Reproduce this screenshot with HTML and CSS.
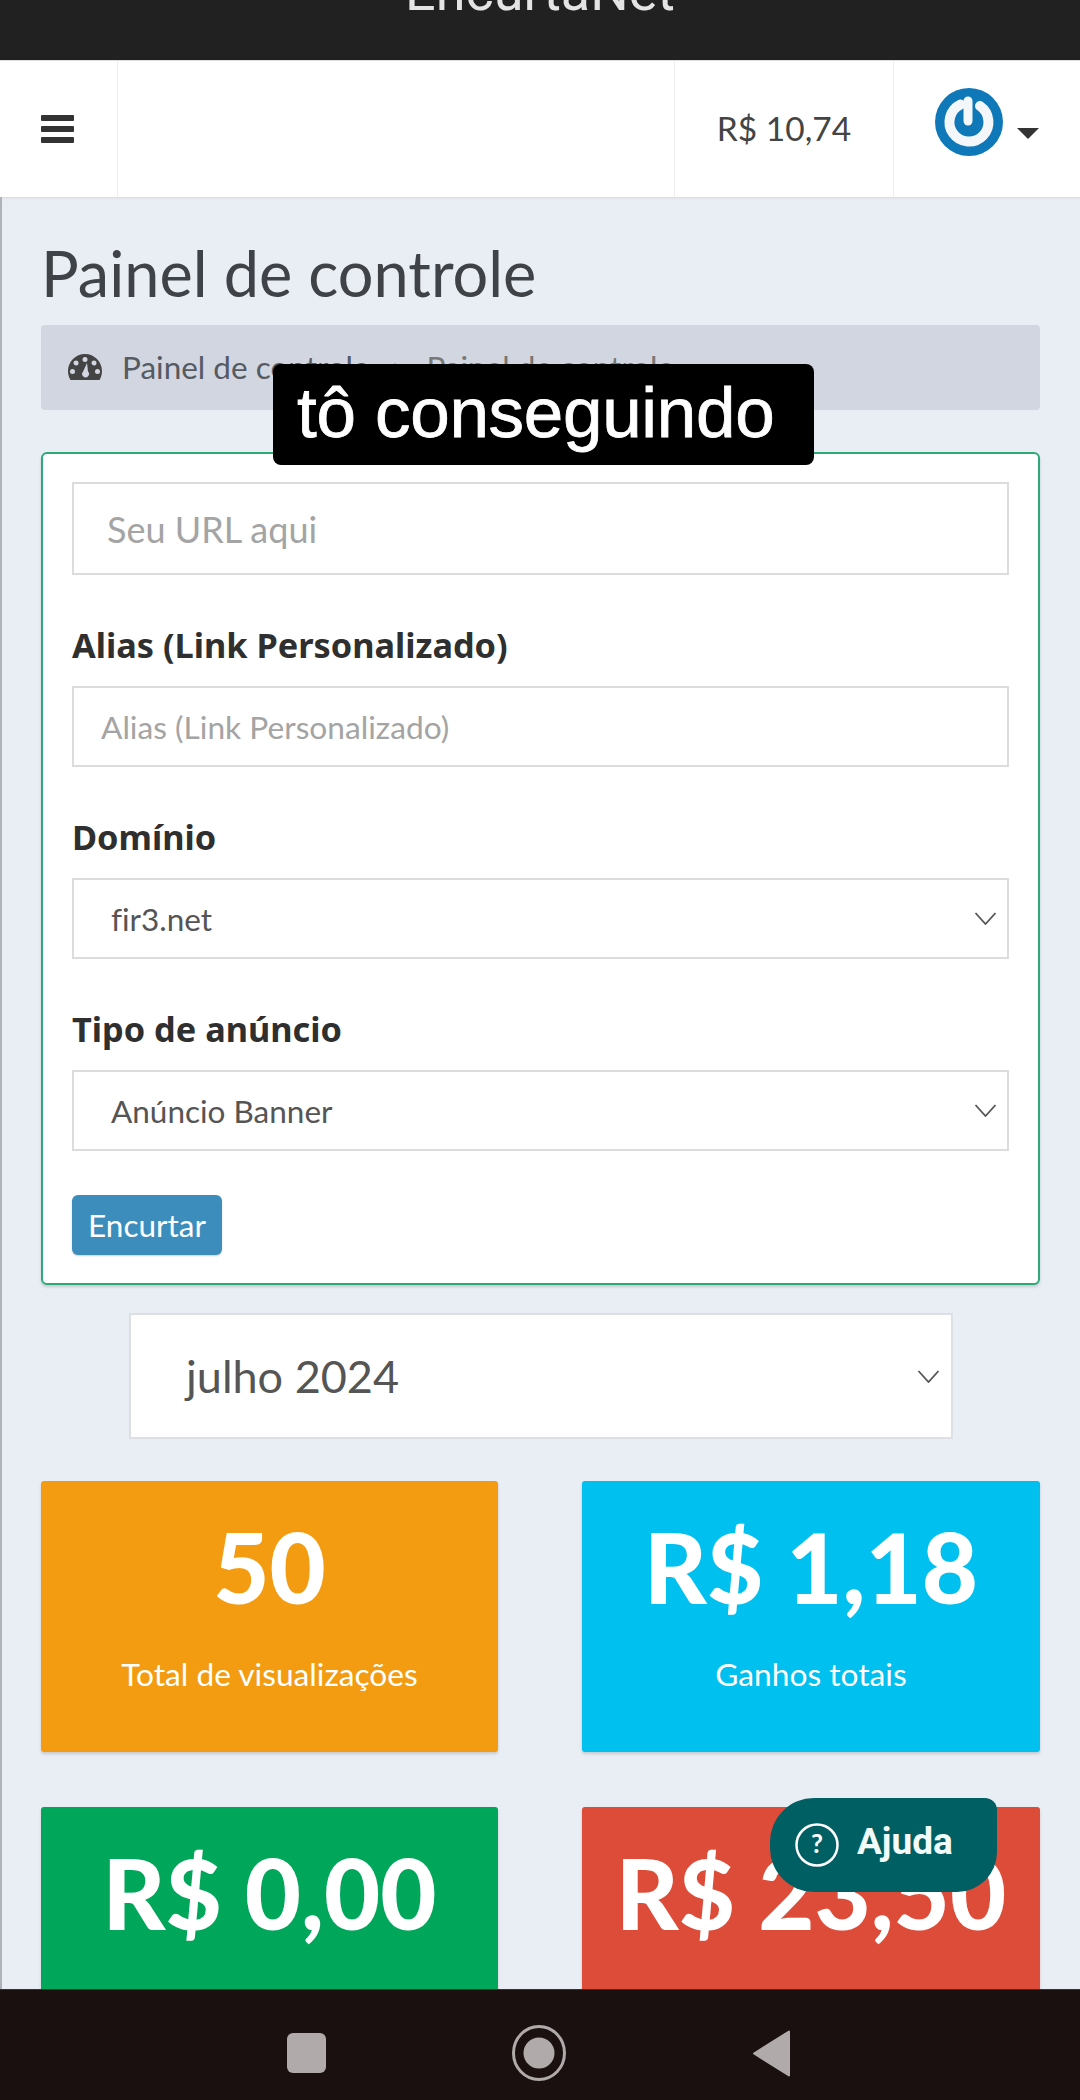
FILE: index.html

```html
<!DOCTYPE html>
<html lang="pt-BR">
<head>
  <meta charset="UTF-8" />
  <meta name="viewport" content="width=device-width, initial-scale=1.0" />
  <title>EncurtaNet - Painel de controle</title>
  <link rel="stylesheet" href="styles.css">
</head>
<body>
  <div class="topbar"><span>EncurtaNet</span></div>

  <nav class="navbar">
    <div class="nav-toggle">
      <svg class="burger" viewBox="0 0 33 28"><rect width="33" height="6" rx="1"/><rect y="11" width="33" height="6" rx="1"/><rect y="22" width="33" height="6" rx="1"/></svg>
    </div>
    <div class="nav-space"></div>
    <div class="nav-balance">R$ 10,74</div>
    <div class="nav-user">
      <svg class="avatar" viewBox="0 0 68 68">
        <circle cx="34" cy="34" r="34" fill="#0f78b8"/>
        <path d="M25.500 16.500 A19.500 19.500 0 1 0 45 18" fill="none" stroke="#f4f7fa" stroke-width="10" stroke-linecap="round"/>
        <path d="M33 13 V33" stroke="#f4f7fa" stroke-width="9" stroke-linecap="round"/>
      </svg>
      <span class="caret"></span>
    </div>
  </nav>

  <main class="content">
    <h1 class="page-title">Painel de controle</h1>

    <div class="breadcrumb">
      <svg class="gauge" viewBox="0 0 34 26">
        <path fill-rule="evenodd" d="M17 0C7.6 0 0 7.6 0 17c0 3.3 .9 6.300 2.500 9h29c1.600-2.700 2.500-5.700 2.500-9C34 7.600 26.400 0 17 0zM17 3a2.500 2.500 0 1 1 0 5 2.500 2.500 0 0 1 0-5zM8 6.500a2.500 2.500 0 1 1 0 5 2.500 2.500 0 0 1 0-5zM26 6.500a2.500 2.500 0 1 1 0 5 2.500 2.500 0 0 1 0-5zM4.500 15a2.500 2.500 0 1 1 0 5 2.500 2.500 0 0 1 0-5zM29.500 15a2.500 2.500 0 1 1 0 5 2.500 2.500 0 0 1 0-5zM19 9l1 8.500a3.400 3.400 0 1 1-5 .2z"/>
      </svg>
      <span>Painel de controle</span>
      <span class="crumb-sep">&gt;</span>
      <span class="crumb-active">Painel de controle</span>
    </div>

    <form class="box-form">
      <input class="field field-url" type="text" placeholder="Seu URL aqui" />

      <label class="form-label">Alias (Link Personalizado)</label>
      <input class="field field-alias" type="text" placeholder="Alias (Link Personalizado)" />

      <label class="form-label">Domínio</label>
      <div class="field select-box"><span>fir3.net</span><svg class="chevron" viewBox="0 0 22 13"><path d="M1 1l10 11L21 1"/></svg></div>

      <label class="form-label">Tipo de anúncio</label>
      <div class="field select-box"><span>Anúncio Banner</span><svg class="chevron" viewBox="0 0 22 13"><path d="M1 1l10 11L21 1"/></svg></div>

      <button class="btn-short" type="button">Encurtar</button>
    </form>

    <div class="month-select"><span>julho 2024</span><svg class="chevron" viewBox="0 0 22 13"><path d="M1 1l10 11L21 1"/></svg></div>

    <section class="stats">
      <div class="stat stat-orange"><strong>50</strong><span>Total de visualizações</span></div>
      <div class="stat stat-blue"><strong>R$ 1,18</strong><span>Ganhos totais</span></div>
      <div class="stat stat-green"><strong>R$ 0,00</strong><span>Ganhos de referência</span></div>
      <div class="stat stat-red"><strong>R$ 23,50</strong><span>Pagamento médio</span></div>
    </section>

    <div class="caption">tô conseguindo</div>

    <div class="help-btn">
      <svg class="help-icon" viewBox="0 0 44 44">
        <circle cx="22" cy="22" r="20.500" fill="none" stroke="#fff" stroke-width="2.500"/>
        <text x="22" y="30" text-anchor="middle">?</text>
      </svg>
      <span>Ajuda</span>
    </div>
  </main>

  <div class="sysnav">
    <span class="sys-square"></span>
    <svg class="sys-home" viewBox="0 0 54 56"><ellipse cx="27" cy="28" rx="25.500" ry="26.500" fill="none" stroke="#b0aaaa" stroke-width="3"/><ellipse cx="27" cy="28" rx="15.500" ry="15.500" fill="#b0aaaa"/></svg>
    <svg class="sys-back" viewBox="0 0 37 47"><path d="M36 1.500V45.500L1 23.500z" fill="#b0aaaa" stroke="#b0aaaa" stroke-width="2" stroke-linejoin="round"/></svg>
  </div>
</body>
</html>
```

FILE: styles.css

```css
* {
  box-sizing: border-box;
}
html, body {
  margin: 0;
  height: 2100px;
  overflow: hidden;
}
body {
  display: flex;
  flex-direction: column;
  font-family: "Lato", "Noto Sans", sans-serif;
  font-variant-ligatures: none;
  color: #333;
  background: #e9edf4;
}

/* app title bar, text is cut off by the top of the screen */
.topbar {
  height: 60px;
  flex: none;
  background: #212121;
  overflow: hidden;
  text-align: center;
  font-family: "Roboto", sans-serif;
  color: #e4e4e4;
}
.topbar span {
  display: block;
  font-size: 54px;
  line-height: 54px;
  margin-top: -35px;
}

.navbar {
  height: 137px;
  flex: none;
  display: flex;
  background: #fff;
  border-top: 1px solid #ddd;
}
.nav-toggle {
  width: 118px;
  padding: 54px 0 0 41px;
  border-right: 1px solid #eee;
}
.burger {
  display: block;
  width: 33px;
  height: 28px;
  fill: #333;
}
.nav-space {
  flex: 1;
}
.nav-balance {
  width: 220px;
  border-left: 1px solid #eee;
  border-right: 1px solid #eee;
  display: flex;
  align-items: center;
  justify-content: center;
  font-size: 33.500px;
  color: #444;
  padding-bottom: 2px;
}
.nav-user {
  width: 186px;
  display: flex;
  align-items: flex-start;
  padding: 27px 0 0 41px;
}
.avatar {
  width: 68px;
  height: 68px;
}
.caret {
  margin: 40px 0 0 14px;
  border-top: 11px solid #333;
  border-left: 11px solid transparent;
  border-right: 11px solid transparent;
}

.content {
  position: relative;
  flex: 1;
  min-height: 0;
  overflow: hidden;
  padding: 0 40px 0 39px;
  background: #e9edf4;
  border-left: 2px solid #aeb2ba;
  box-shadow: inset 0 3px 3px -2px #d5d8de;
}
.page-title {
  margin: 40px 0 0;
  font-size: 63px;
  line-height: 72px;
  font-weight: 400;
  color: #3f4347;
}
.breadcrumb {
  height: 85px;
  margin-top: 16px;
  display: flex;
  align-items: center;
  padding: 0 0 2px 27px;
  border-radius: 4px;
  background: #d2d6e0;
  color: #555a63;
  font-size: 31.500px;
}
.gauge {
  width: 34px;
  height: 26px;
  margin-right: 20px;
  fill: #444;
}
.crumb-sep {
  margin: 0 22px;
  color: #888;
  font-size: 22px;
}
.crumb-active {
  color: #777;
}

.box-form {
  height: 833px;
  margin-top: 42px;
  display: flex;
  flex-direction: column;
  align-items: flex-start;
  padding: 28px 29px 0;
  background: #fff;
  border: 2px solid #2eaa78;
  border-radius: 6px;
  box-shadow: 0 2px 3px rgba(0, 0, 0, .15);
}
.field {
  width: 100%;
  border: 2px solid #dcdcdc;
  background: #fff;
  font-family: inherit;
  color: #555;
}
.field::placeholder {
  color: #a4a4a4;
  opacity: 1;
}
.field-url {
  height: 93px;
  padding: 0 33px;
  font-size: 36px;
}
.field-alias {
  height: 81px;
  padding: 0 27px;
  font-size: 31.700px;
}
.form-label {
  margin-top: 48px;
  height: 44px;
  line-height: 44px;
  font-family: "Noto Sans", sans-serif;
  font-size: 34.300px;
  font-weight: 700;
  color: #2f2f2f;
}
.form-label + .field {
  margin-top: 19px;
}
.select-box {
  height: 81px;
  display: flex;
  align-items: center;
  justify-content: space-between;
  padding: 0 10px 0 37px;
  font-size: 31.500px;
}
.chevron {
  width: 23px;
  height: 13px;
  fill: none;
  stroke: #555;
  stroke-width: 1.800;
}
.btn-short {
  width: 150px;
  height: 60px;
  margin-top: 44px;
  border: none;
  border-radius: 6px;
  background: #3c8dbc;
  color: #fff;
  font-family: inherit;
  font-size: 31.500px;
  padding: 0;
  box-shadow: 0 1px 2px rgba(0, 0, 0, .2);
}

.month-select {
  width: 824px;
  height: 126px;
  margin: 28px 0 0 88px;
  display: flex;
  align-items: center;
  justify-content: space-between;
  padding: 0 11px 0 55px;
  background: #fff;
  border: 2px solid #dcdfe4;
  font-size: 45px;
  color: #555;
}

.stats {
  display: grid;
  grid-template-columns: 457px 458px;
  column-gap: 84px;
  row-gap: 55px;
  margin-top: 42px;
}
.stat {
  height: 271px;
  display: flex;
  flex-direction: column;
  align-items: center;
  border-radius: 3px;
  color: #fff;
  box-shadow: 0 2px 3px rgba(0, 0, 0, .15);
}
.stat strong {
  margin-top: 26px;
  font-size: 97px;
  line-height: 120px;
  font-weight: 900;
  white-space: nowrap;
}
.stat span {
  margin-top: 27px;
  font-size: 31.700px;
  line-height: 40px;
}
.stat-orange { background: #f39c12; }
.stat-blue { background: #00c0ef; }
.stat-green { background: #00a65a; }
.stat-red { background: #dd4b39; }

/* video caption stuck over the page */
.caption {
  position: absolute;
  left: 271px;
  top: 167px;
  width: 541px;
  height: 101px;
  padding-left: 24px;
  background: #000;
  border-radius: 8px;
  color: #fff;
  font-family: "Liberation Sans", Arial, sans-serif;
  font-size: 71px;
  line-height: 98px;
  letter-spacing: -0.3px;
  -webkit-text-stroke: 0.8px #fff;
  white-space: nowrap;
}

/* floating help button */
.help-btn {
  position: absolute;
  left: 768px;
  top: 1601px;
  width: 227px;
  height: 94px;
  display: flex;
  align-items: center;
  gap: 18px;
  padding-left: 25px;
  background: #005f63;
  border-radius: 44px 12px 40px 44px;
  color: #f2fbfa;
  font-family: "Roboto", sans-serif;
  font-size: 37px;
  font-weight: 700;
}
.help-btn span {
  margin-top: -7px;
}
.help-icon {
  width: 44px;
  height: 44px;
}
.help-icon text {
  fill: #fff;
  font-size: 26px;
  font-family: "Lato", sans-serif;
}

.sysnav {
  height: 111px;
  flex: none;
  display: flex;
  align-items: center;
  padding: 16px 0 0 287px;
  background: #1a1010;
  border-top: 1px solid #333;
}
.sys-square {
  width: 39px;
  height: 40px;
  border-radius: 6px;
  background: #b0aaaa;
  margin-right: 186px;
}
.sys-home {
  width: 54px;
  height: 56px;
  margin-right: 187px;
}
.sys-back {
  width: 37px;
  height: 47px;
}
```
